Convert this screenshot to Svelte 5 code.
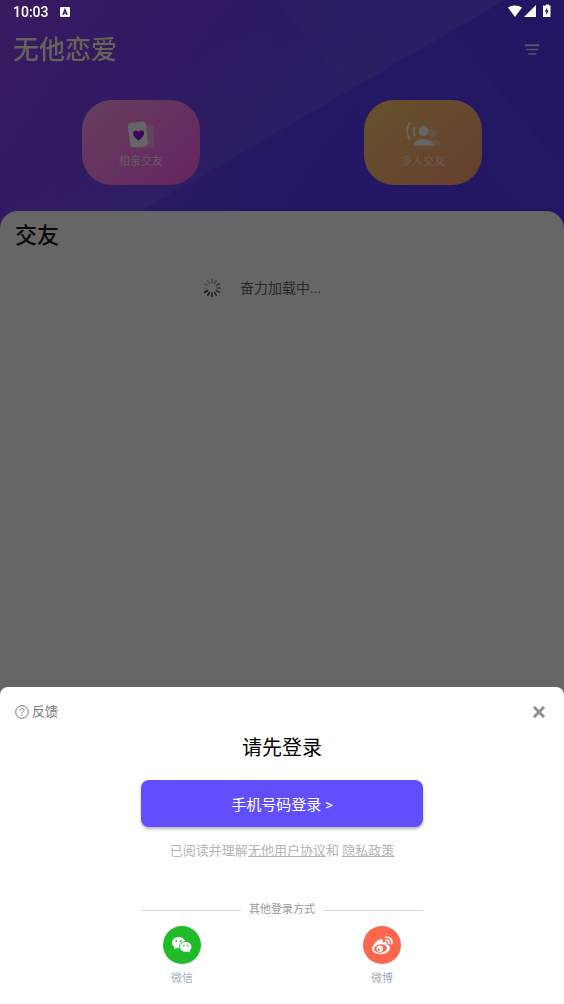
<script>
  let open = $state(true);

  const rooms = [
    { id: 'date', name: '相亲交友' },
    { id: 'group', name: '多人交友' }
  ];
  const spokes = Array.from({ length: 12 }, (_, i) => i);

  function close() {
    open = false;
  }
</script>

<div class="page">
  <header class="hero">
    <svg class="rays" viewBox="0 0 564 230" preserveAspectRatio="none" aria-hidden="true">
      <defs>
        <linearGradient id="beam" gradientUnits="userSpaceOnUse" x1="220" y1="30" x2="290" y2="135">
          <stop offset="0" stop-color="#fff" stop-opacity="0" />
          <stop offset="1" stop-color="#fff" stop-opacity="0.08" />
        </linearGradient>
      </defs>
      <polygon points="310,0 505,0 110,230 0,230 0,170" fill="url(#beam)" />
      <polygon points="277,0 505,0 350,91" fill="#fff" opacity="0.03" />
      <polygon points="350,91 401,61 540,230 460,230" fill="#fff" opacity="0.01" />
      <polygon points="401,61 450,32 564,170 564,230 540,230" fill="#fff" opacity="0.02" />
    </svg>
    <div class="topbar">
      <h1 class="logo">无他恋爱</h1>
      <button class="menu" aria-label="菜单">
        <svg width="16" height="12" viewBox="0 0 16 12" stroke="#d8d8e4" stroke-width="2" stroke-linecap="round">
          <path d="M1.500 1.200H14.500" />
          <path d="M3 5.500H13.500" stroke-width="1.700" />
          <path d="M5 10H11.500" stroke-width="1.700" />
        </svg>
      </button>
    </div>
    <nav class="rooms">
      {#each rooms as room (room.id)}
        <button class="room {room.id}">
          {#if room.id === 'date'}
            <svg width="36" height="28" viewBox="0 0 36 28">
              <rect x="14" y="4" width="17" height="23" rx="3" fill="#fff" opacity="0.3" />
              <rect x="6" y="1" width="18" height="25" rx="4" fill="#fff" transform="rotate(-7 15 14)" />
              <path d="M15.500 19.500C8 14.500 9.500 9.500 13 9.500C14.700 9.500 15.500 11.200 15.500 11.200C15.500 11.200 16.700 9.200 18.500 9.200C22 9.200 23 14.500 15.500 19.500Z" fill="#a010e8" />
            </svg>
          {:else}
            <svg width="36" height="28" viewBox="0 0 36 28">
              <g fill="#fff" opacity="0.3">
                <circle cx="27" cy="12" r="4.200" />
                <path d="M22 24.500H35.500C35.500 20.500 31 18.500 26 18.500Z" />
              </g>
              <circle cx="18.500" cy="10" r="5" fill="#fff" />
              <path d="M8.500 24.500C8.500 16 28.500 16 28.500 24.500Z" fill="#fff" />
              <path d="M5 1.500Q-1 10 5 18.500M10 6Q7 10.500 10 15" fill="none" stroke="#fff" stroke-width="1.800" />
            </svg>
          {/if}
          <span>{room.name}</span>
        </button>
      {/each}
    </nav>
  </header>

  <main class="feed">
    <h2>交友</h2>
    <div class="loading" role="status">
      <svg width="18" height="20" viewBox="0 0 18 20" stroke="#222" stroke-width="1.600" stroke-linecap="round">
        {#each spokes as i}
          <path d="M9 1.500V5" transform="rotate({i * 30} 9 10)" opacity={i < 9 ? 0.35 + i * 0.07 : 0.15 + (i - 9) * 0.08} />
        {/each}
      </svg>
      <span>奋力加载中...</span>
    </div>
  </main>
</div>

{#if open}
  <div class="backdrop">
    <section class="dialog" role="dialog" aria-modal="true" aria-labelledby="login-title">
      <div class="dialog-bar">
        <button class="feedback">
          <svg width="14" height="14" viewBox="0 0 14 14" fill="none" stroke="#777" stroke-width="1">
            <circle cx="7" cy="7" r="6.300" />
            <path d="M5 5.500C5 2.700 9.200 2.800 9 5.300C8.900 6.700 7 6.700 7 8.500M7 9.700V10.900" />
          </svg>
          反馈
        </button>
        <button class="close" aria-label="关闭" onclick={close}>
          <svg width="12" height="12" viewBox="0 0 12 12" stroke="#909097" stroke-width="3" stroke-linecap="round">
            <path d="M1.800 1.800L10.200 10.200M10.200 1.800L1.800 10.200" />
          </svg>
        </button>
      </div>
      <h2 id="login-title">请先登录</h2>
      <button class="phone">手机号码登录 &gt;</button>
      <p class="terms">已阅读并理解<a href="#agreement">无他用户协议</a>和 <a href="#privacy">隐私政策</a></p>
      <div class="divider"><span>其他登录方式</span></div>
      <div class="others">
        <button class="other">
          <svg width="38" height="38" viewBox="0 0 38 38">
            <circle cx="19" cy="19" r="19" fill="#1fbb28" />
            <path d="M15.500 11C11.700 11 9 13.400 9 16.500C9 18.500 10 20 11.500 21L11 23.200L13.600 21.900C14.500 22.200 15.300 22.300 16.400 22.200C15.500 18 19 15.300 22.100 15.500C21.500 12.700 18.700 11 15.500 11Z" fill="#fff" />
            <path d="M22.800 16C19.500 16 17 18.100 17 20.900C17 23.700 19.500 25.700 22.800 25.700C23.600 25.700 24.200 25.600 24.900 25.400L27 26.500L26.500 24.500C27.800 23.600 28.500 22.400 28.500 20.900C28.500 18.100 26 16 22.800 16Z" fill="#fff" />
            <g fill="#1fbb28">
              <circle cx="13.200" cy="15" r="0.900" />
              <circle cx="17.700" cy="15" r="0.900" />
              <circle cx="20.900" cy="19.600" r="0.800" />
              <circle cx="24.700" cy="19.600" r="0.800" />
            </g>
          </svg>
          微信
        </button>
        <button class="other">
          <svg width="38" height="38" viewBox="0 0 38 38">
            <circle cx="19" cy="19" r="19" fill="#ff6650" />
            <path d="M18.500 13C16 12.600 9 18.500 9 22.800C9 26.200 13 28.200 17.700 28.200C23.500 28.200 27 25.100 27 22C27 20 25.500 19 24 18.600C24.700 16 22.600 15.500 19.600 16.600C20 15 20 13.300 18.500 13Z" fill="#fff" />
            <ellipse cx="17.500" cy="22.500" rx="6.500" ry="4.200" transform="rotate(-8 17.500 22.500)" fill="#ff6650" />
            <circle cx="16.700" cy="22.800" r="3.200" fill="#fff" />
            <circle cx="15.700" cy="23.700" r="1.200" fill="#ff6650" />
            <circle cx="18" cy="22.300" r="0.500" fill="#ff6650" />
            <path d="M22.500 11.400C26.800 10.500 30 14 28.500 18M23 14.400C25.300 13.900 26.600 15.500 25.900 17.500" fill="none" stroke="#fff" stroke-width="1.600" stroke-linecap="round" />
          </svg>
          微博
        </button>
      </div>
    </section>
  </div>
{/if}

<div class="status">
  <span>10:03</span>
  <svg width="10" height="10" viewBox="0 0 10 10">
    <rect width="10" height="10" rx="1" fill="#fff" />
    <path d="M2.800 8L5 2.500L7.200 8M3.700 6.200H6.300" fill="none" stroke="#33196a" stroke-width="1.300" />
  </svg>
  <svg class="signals" width="43" height="14" viewBox="0 0 43 14" fill="#fff">
    <path d="M0 2.500Q7 -1.500 14 2.500L7 12Z" />
    <path d="M28 0V12H16Z" />
    <path d="M37 0.500H38V-0.500H41V0.500H42.500V12H35V0.500Z" />
    <path d="M39.200 2.500L36.800 6.500H38.200V10L40.800 5.500H39.200Z" fill="#241768" />
  </svg>
</div>

<style>
  :global(body) {
    margin: 0;
    background: #fff;
    font-family: Roboto, 'Noto Sans CJK SC', sans-serif;
  }
  button {
    padding: 0;
    border: none;
    background: none;
    color: inherit;
    font: inherit;
    cursor: pointer;
  }
  h1, h2, p {
    margin: 0;
  }
  svg {
    display: block;
    flex: none;
  }
  .page {
    min-height: 100vh;
    background: #fff;
  }
  .hero {
    position: relative;
    padding: 24px 0 44px;
    background: linear-gradient(125deg, #8c42f4 0%, #7440f4 30%, #583af8 60%, #5438fc 100%);
  }
  .rays {
    position: absolute;
    inset: 0;
    width: 100%;
    height: 100%;
  }
  .topbar {
    position: relative;
    display: flex;
    justify-content: space-between;
    align-items: center;
    height: 52px;
    padding: 0 24px 0 13px;
  }
  .logo {
    font-size: 26px;
    line-height: 36px;
    font-weight: 500;
    background: linear-gradient(100deg, #f8f8e4, #fffbd0);
    background-clip: text;
    color: transparent;
  }
  .rooms {
    position: relative;
    display: grid;
    grid-template-columns: 1fr 1fr;
    justify-items: center;
    padding-top: 24px;
  }
  .room {
    display: flex;
    flex-direction: column;
    align-items: center;
    justify-content: center;
    gap: 5px;
    width: 118px;
    height: 85px;
    padding-top: 5px;
    border-radius: 30px;
    color: #fff;
    font-size: 11px;
    line-height: 16px;
  }
  .date {
    background: linear-gradient(135deg, #fe9ae8, #fd7cee 50%, #fc5cf0);
  }
  .group {
    background: linear-gradient(135deg, #fcd070, #ffb474 50%, #ff9c74);
  }
  .date span {
    opacity: 0.8;
  }
  .group span {
    opacity: 0.7;
  }
  .feed {
    position: relative;
    margin-top: -18px;
    padding: 9px 15px;
    border-radius: 18px 18px 0 0;
    background: #fff;
    color: #191924;
  }
  .feed h2 {
    font-size: 22px;
    line-height: 32px;
    font-weight: 500;
  }
  .loading {
    display: flex;
    justify-content: center;
    align-items: center;
    gap: 19px;
    padding-top: 26px;
    color: #666;
    font-size: 14px;
    line-height: 20px;
  }
  .loading span {
    width: 121px;
  }
  .backdrop {
    position: fixed;
    inset: 0;
    display: flex;
    align-items: flex-end;
    background: rgba(0, 0, 0, 0.6);
  }
  .dialog {
    display: flex;
    flex-direction: column;
    align-items: center;
    width: 100%;
    padding-bottom: 17px;
    border-radius: 8px 8px 0 0;
    background: #fff;
  }
  .dialog-bar {
    display: flex;
    justify-content: space-between;
    align-items: center;
    align-self: stretch;
    height: 42px;
    padding: 4px 19px 0 15px;
  }
  .feedback {
    display: flex;
    align-items: center;
    gap: 3px;
    color: #777;
    font-size: 13px;
    line-height: 20px;
  }
  .dialog h2 {
    color: #000;
    font-size: 20px;
    line-height: 30px;
    font-weight: 400;
  }
  .phone {
    width: 50%;
    height: 47px;
    margin-top: 17px;
    border-radius: 8px;
    background: #614fff;
    box-shadow: 0 2px 3px rgba(0, 0, 0, 0.3);
    color: #fff;
    font-size: 15px;
  }
  .terms {
    margin-top: 14px;
    color: #b4b4b4;
    font-size: 13px;
    line-height: 20px;
  }
  .terms a {
    color: inherit;
  }
  .divider {
    display: flex;
    align-items: center;
    gap: 8px;
    width: 50%;
    margin-top: 41px;
    color: #999;
    font-size: 11px;
    line-height: 16px;
  }
  .divider::before,
  .divider::after {
    content: '';
    flex: 1;
    height: 1px;
    background: #ddd6d6;
  }
  .others {
    display: grid;
    grid-template-columns: 1fr 1fr;
    justify-items: center;
    width: 71%;
    margin-top: 8px;
  }
  .other {
    display: flex;
    flex-direction: column;
    align-items: center;
    gap: 7px;
    color: #a4acba;
    font-size: 11px;
    line-height: 16px;
  }
  .status {
    position: fixed;
    inset: 0 0 auto;
    display: flex;
    align-items: center;
    gap: 11px;
    height: 24px;
    padding: 0 13px;
    color: #fff;
    font-size: 14px;
    font-weight: 500;
  }
  .signals {
    margin-left: auto;
    overflow: visible;
  }
</style>
